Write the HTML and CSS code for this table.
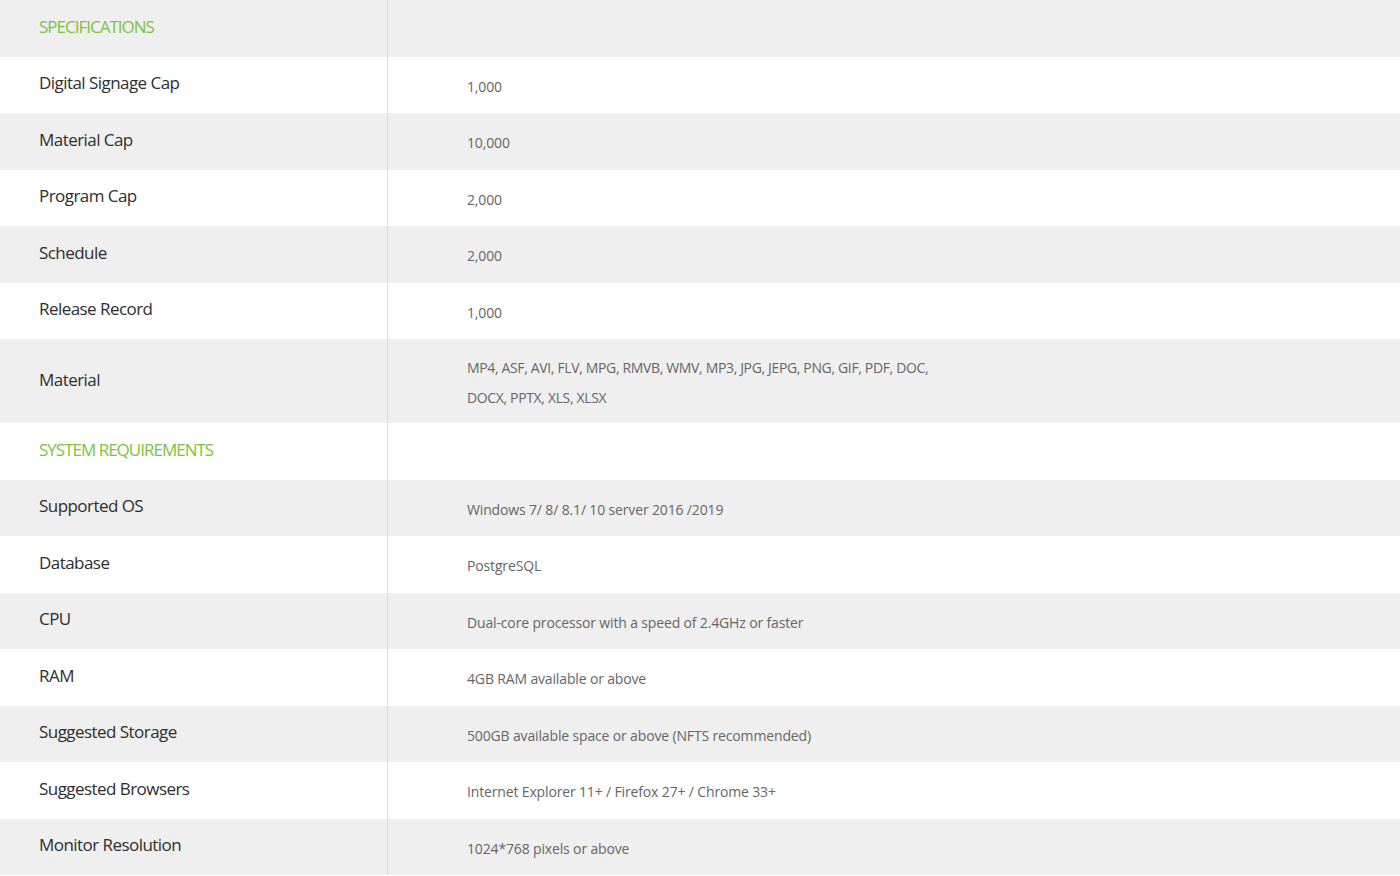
FILE: index.html
```html
<!DOCTYPE html>
<html>
<head>
<meta charset="utf-8">
<link rel="stylesheet" href="styles.css">
</head>
<body>
<div class="spec">
  <div class="row grey"><div class="label head">SPECIFICATIONS</div><div class="value"></div></div>
  <div class="row white"><div class="label">Digital Signage Cap</div><div class="value">1,000</div></div>
  <div class="row grey"><div class="label">Material Cap</div><div class="value">10,000</div></div>
  <div class="row white"><div class="label">Program Cap</div><div class="value">2,000</div></div>
  <div class="row grey"><div class="label">Schedule</div><div class="value">2,000</div></div>
  <div class="row white"><div class="label">Release Record</div><div class="value">1,000</div></div>
  <div class="row grey tall"><div class="label">Material</div><div class="value multi">MP4, ASF, AVI, FLV, MPG, RMVB, WMV, MP3, JPG, JEPG, PNG, GIF, PDF, DOC,<br>DOCX, PPTX, XLS, XLSX</div></div>
  <div class="row white"><div class="label head">SYSTEM REQUIREMENTS</div><div class="value"></div></div>
  <div class="row grey"><div class="label">Supported OS</div><div class="value">Windows 7/ 8/ 8.1/ 10 server 2016 /2019</div></div>
  <div class="row white"><div class="label">Database</div><div class="value">PostgreSQL</div></div>
  <div class="row grey"><div class="label">CPU</div><div class="value">Dual-core processor with a speed of 2.4GHz or faster</div></div>
  <div class="row white"><div class="label">RAM</div><div class="value">4GB RAM available or above</div></div>
  <div class="row grey"><div class="label">Suggested Storage</div><div class="value">500GB available space or above (NFTS recommended)</div></div>
  <div class="row white"><div class="label">Suggested Browsers</div><div class="value">Internet Explorer 11+ / Firefox 27+ / Chrome 33+</div></div>
  <div class="row grey"><div class="label">Monitor Resolution</div><div class="value">1024*768 pixels or above</div></div>
</div>
</body>
</html>
```

FILE: styles.css
```css
html, body {
  margin: 0;
  padding: 0;
  background: #ffffff;
}

.spec {
  display: flex;
  flex-direction: column;
  width: 1400px;
  font-family: "Open Sans", "Liberation Sans", sans-serif;
}

.row {
  display: grid;
  grid-template-columns: 388px 1fr;
  height: 56.5px;
}

.row.tall {
  height: 84px;
}

.grey {
  background: #efefef;
}

.white {
  background: #ffffff;
}

.label {
  display: flex;
  align-items: center;
  padding-left: 39px;
  padding-bottom: 4px;
  border-right: 1px solid #dcdcdc;
  font-size: 17px;
  letter-spacing: -0.55px;
  color: #2e2e2e;
}

.label.head {
  color: #7cc242;
  letter-spacing: -1px;
}

.value {
  display: flex;
  align-items: center;
  padding-left: 79px;
  padding-top: 3px;
  font-size: 14px;
  letter-spacing: -0.15px;
  color: #666666;
}

.value.multi {
  line-height: 30px;
  letter-spacing: -0.35px;
}
```
